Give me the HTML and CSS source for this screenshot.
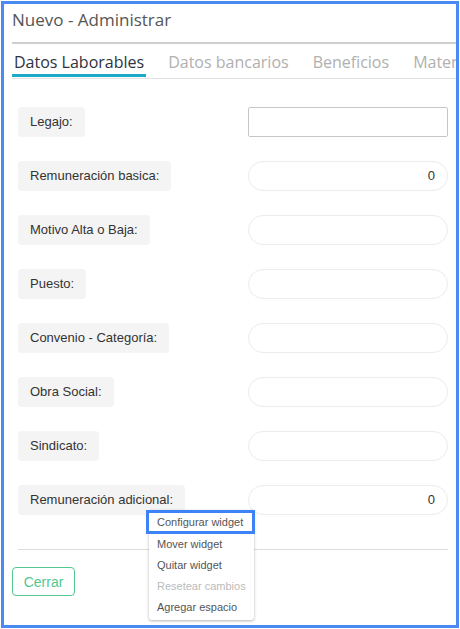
FILE: index.html
```html
<!DOCTYPE html>
<html lang="es">
<head>
<meta charset="utf-8">
<title>Nuevo - Administrar</title>
<link rel="stylesheet" href="styles.css">
</head>
<body>
<div class="frame">
  <div class="header">
    <h1 class="title">Nuevo - Administrar</h1>
  </div>
  <div class="tabs">
    <div class="tab active">Datos Laborables</div>
    <div class="tab">Datos bancarios</div>
    <div class="tab">Beneficios</div>
    <div class="tab">Maternidad</div>
  </div>
  <div class="form">
    <div class="label">Legajo:</div><div class="input square"></div>
    <div class="label">Remuneración basica:</div><div class="input">0</div>
    <div class="label">Motivo Alta o Baja:</div><div class="input"></div>
    <div class="label">Puesto:</div><div class="input"></div>
    <div class="label">Convenio - Categoría:</div><div class="input"></div>
    <div class="label">Obra Social:</div><div class="input"></div>
    <div class="label">Sindicato:</div><div class="input"></div>
    <div class="label">Remuneración adicional:</div><div class="input">0</div>
  </div>
  <div class="divider"></div>
  <div class="footer">
    <button class="btn">Cerrar</button>
  </div>
  <ul class="menu">
    <li class="item selected">Configurar widget</li>
    <li class="item">Mover widget</li>
    <li class="item">Quitar widget</li>
    <li class="item disabled">Resetear cambios</li>
    <li class="item">Agregar espacio</li>
  </ul>
</div>
</body>
</html>
```
FILE: styles.css
```css
html, body {
  margin: 0;
  padding: 0;
  background: #fff;
}
body {
  padding: 1px 0 0 1px;
  font-family: "Liberation Sans", Arial, sans-serif;
}
.frame {
  position: relative;
  box-sizing: border-box;
  width: 458px;
  height: 627px;
  border: 3px solid #4a8af5;
  overflow: hidden;
}
.header {
  margin-left: 8px;
  border-bottom: 2px solid #cfcfcf;
  height: 38px;
}
.title {
  margin: 0;
  font-family: "Open Sans", sans-serif;
  font-weight: 400;
  font-size: 17px;
  line-height: 32px;
  color: #555;
}
.tabs {
  margin-left: 8px;
  display: flex;
  gap: 20px;
  white-space: nowrap;
  overflow: hidden;
  border-bottom: 1px solid #e2e2e2;
  padding: 7px 0 1px;
}
.tab {
  font-family: "Open Sans", sans-serif;
  font-size: 16px;
  line-height: 23px;
  padding: 0 2px;
  color: #b0b0b0;
  border-bottom: 3px solid transparent;
  flex: none;
}
.tab.active {
  color: #2d3340;
  border-bottom-color: #1ea8c9;
}
.form {
  display: grid;
  grid-template-columns: 1fr 200px;
  row-gap: 24px;
  padding: 28px 8px 0 14px;
  align-items: center;
}
.label {
  justify-self: start;
  background: #f4f4f4;
  border-radius: 4px;
  height: 30px;
  line-height: 30px;
  padding: 0 12px;
  font-size: 13px;
  color: #333;
}
.input {
  box-sizing: border-box;
  height: 30px;
  line-height: 28px;
  border: 1px solid #ececec;
  border-radius: 15px;
  text-align: right;
  padding: 0 12px;
  font-size: 13px;
  color: #333;
}
.input.square {
  border-color: #c6c6c6;
  border-radius: 2px;
}
.divider {
  margin: 34px 8px 0 14px;
  border-top: 1px solid #dcdcdc;
}
.footer {
  padding: 17px 0 0 8px;
}
.btn {
  box-sizing: border-box;
  width: 63px;
  height: 29px;
  background: #fff;
  border: 1px solid #52c78f;
  border-radius: 4px;
  color: #52c78f;
  font-family: "Liberation Sans", Arial, sans-serif;
  font-size: 14px;
  padding: 0;
}
.menu {
  position: absolute;
  left: 145px;
  top: 506px;
  width: 105px;
  margin: 0;
  padding: 0 0 2px;
  list-style: none;
  background: #fff;
  border-radius: 0 0 3px 3px;
  box-shadow: 0 1px 3px rgba(0,0,0,0.3);
}
.item {
  box-sizing: border-box;
  height: 21px;
  line-height: 21px;
  padding-left: 8px;
  font-size: 11px;
  color: #555;
  white-space: nowrap;
}
.item.selected {
  height: 24px;
  line-height: 18px;
  border: 3px solid #3d82f6;
  padding-left: 8px;
  margin-left: -3px;
  margin-right: -1px;
}
.item.disabled {
  color: #bbb;
}
```
